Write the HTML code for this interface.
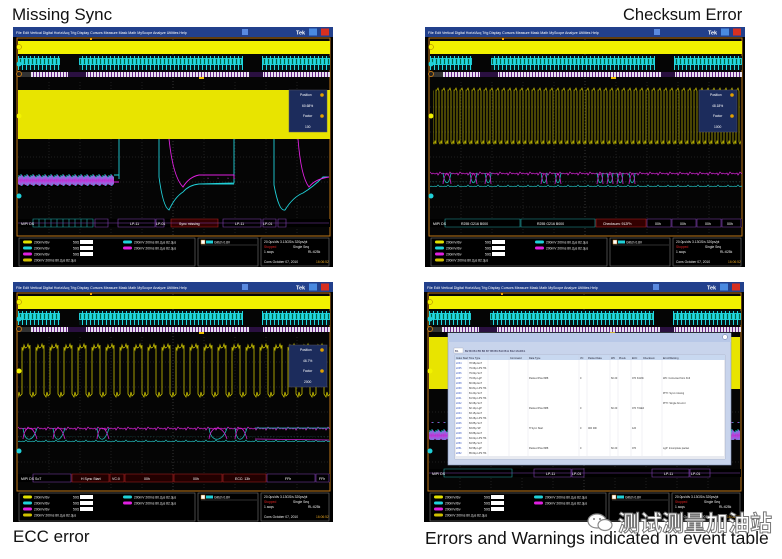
<!DOCTYPE html>
<html><head><meta charset="utf-8"><style>
body{margin:0;width:782px;height:559px;background:#fff;position:relative;overflow:hidden;font-family:"Liberation Sans",sans-serif}
.t{position:absolute;color:#111;font-family:"Liberation Sans","Noto Sans CJK SC",sans-serif;white-space:nowrap}
.p{position:absolute;width:320px;height:240px}
svg text{font-family:"Liberation Sans",sans-serif}
</style></head><body>
<svg width="0" height="0" style="position:absolute"><defs>
<pattern id="cy" width="4" height="14" patternUnits="userSpaceOnUse"><rect width="4" height="14" fill="#061818"/><rect x="0" y="3" width="4" height="7" fill="#1fc8d0"/><rect x="1" y="0" width="1" height="14" fill="#20d8e0"/><rect x="3" y="4" width="1" height="5" fill="#064"/></pattern>
<pattern id="dc" width="3" height="5" patternUnits="userSpaceOnUse"><rect width="3" height="5" fill="#6a2a8a"/><rect width="2" height="5" fill="#e8e0f0"/></pattern>
<pattern id="sq" width="6" height="60" patternUnits="userSpaceOnUse"><polyline points="0,3 1,1 2,4 2,55 3,57 4,54 5,57 5,3 6,3" fill="none" stroke="#c8c000" stroke-width=".7"/></pattern>
<pattern id="sq2" width="14" height="60" patternUnits="userSpaceOnUse"><polyline points="0,5 1,2 2,6 3,3 3,52 5,55 6,50 7,54 9,52 9,5 10,8 11,3 12,6 14,5" fill="none" stroke="#c8c000" stroke-width=".8"/></pattern>
<pattern id="mg" width="10" height="6" patternUnits="userSpaceOnUse"><polyline points="0,3 2,2 3,4 5,1 7,3 8,2 10,3" fill="none" stroke="#d020d0" stroke-width=".7"/></pattern>
<pattern id="cn" width="10" height="6" patternUnits="userSpaceOnUse"><polyline points="0,3 1,4 3,2 5,4 6,3 8,4 10,3" fill="none" stroke="#20b8b8" stroke-width=".7"/></pattern>
<pattern id="nz" width="6" height="18" patternUnits="userSpaceOnUse"><rect width="6" height="18" fill="#000"/><polyline points="0,4 1,14 2,3 3,15 4,5 5,13 6,4" fill="none" stroke="#20d0d8" stroke-width=".8"/><polyline points="0,14 1,5 2,15 3,4 4,14 5,6 6,14" fill="none" stroke="#e020e0" stroke-width=".8"/></pattern>
<g id="frame">
<rect width="320" height="240" fill="#000"/>
<rect width="320" height="10" fill="#22408c"/>
<text x="3" y="7" font-size="3.6" fill="#fff">File  Edit  Vertical  Digital  Horiz/Acq  Trig  Display  Cursors  Measure  Mask  Math  MyScope  Analyze  Utilities  Help</text>
<rect x="229" y="2" width="6" height="6" fill="#5a8ae0"/>
<text x="283" y="7.5" font-size="5.5" font-weight="bold" fill="#fff">Tek</text>
<rect x="296" y="1.5" width="8" height="7" fill="#4a8ae0"/><rect x="308" y="1.5" width="8" height="7" fill="#d83020"/>
<rect x="4" y="11" width="313" height="198" fill="#050505" stroke="#c07818" stroke-width="1"/>
<g stroke="#3a3a3a" stroke-width=".5" stroke-dasharray="1 2">
<line x1="36" y1="55" x2="36" y2="208"/><line x1="67" y1="55" x2="67" y2="208"/><line x1="98" y1="55" x2="98" y2="208"/><line x1="129" y1="55" x2="129" y2="208"/><line x1="160" y1="12" x2="160" y2="208" stroke="#666"/><line x1="191" y1="55" x2="191" y2="208"/><line x1="222" y1="55" x2="222" y2="208"/><line x1="253" y1="55" x2="253" y2="208"/><line x1="284" y1="55" x2="284" y2="208"/>
<line x1="5" y1="80" x2="316" y2="80"/><line x1="5" y1="105" x2="316" y2="105"/><line x1="5" y1="130" x2="316" y2="130"/><line x1="5" y1="155" x2="316" y2="155"/><line x1="5" y1="180" x2="316" y2="180"/>
</g>
<rect x="5" y="14" width="312" height="13" fill="#f2f200"/>
<rect x="5" y="29" width="312" height="14" fill="url(#cy)"/>
<rect x="47" y="28" width="19" height="15" fill="#050505"/><rect x="230" y="28" width="19" height="15" fill="#050505"/>
<rect x="5" y="45" width="312" height="5" fill="url(#dc)"/>
<rect x="5" y="45" width="13" height="5" fill="#333"/><rect x="55" y="45" width="18" height="5" fill="#2a1040"/><rect x="236" y="45" width="14" height="5" fill="#2a1040"/>
<rect x="77" y="11" width="2" height="2" fill="#f0a000"/><rect x="186" y="50" width="5" height="2" fill="#f0c000"/>
<circle cx="6" cy="20" r="2.5" fill="#f2f200" stroke="#a07000" stroke-width=".5"/>
<circle cx="6" cy="37" r="2.5" fill="#20d0d8"/><circle cx="6" cy="47" r="2.5" fill="#222" stroke="#c07818"/>
<rect x="0" y="210" width="320" height="30" fill="#000"/>
<rect x="6" y="211" width="176" height="28" fill="none" stroke="#777" stroke-width=".6"/>
<rect x="185" y="211" width="60" height="28" fill="none" stroke="#777" stroke-width=".6"/>
<rect x="248" y="211" width="68" height="28" fill="none" stroke="#777" stroke-width=".6"/>
<rect x="10" y="213.5" width="9" height="3" rx="1.5" fill="#e0e000"/><rect x="10" y="219.5" width="9" height="3" rx="1.5" fill="#20d0d8"/><rect x="10" y="225.5" width="9" height="3" rx="1.5" fill="#e020e0"/><rect x="10" y="231.5" width="9" height="3" rx="1.5" fill="#d0c000"/>
<g font-size="3.3" fill="#eee"><text x="21" y="216.5">200mV/div</text><text x="21" y="222.5">200mV/div</text><text x="21" y="228.5">200mV/div</text><text x="21" y="234.5">200mV  200ns  80.2μs  82.3μs</text>
<text x="60" y="216.5">50Ω</text><text x="60" y="222.5">50Ω</text><text x="60" y="228.5">50Ω</text>
<text x="121" y="216.5">200mV  200ns  80.2μs  82.3μs</text><text x="121" y="222.5">200mV  200ns  80.2μs  82.3μs</text>
<text x="201" y="216.5">Glitch  0.8V</text>
<text x="251" y="216">20.0μs/div  3.13GS/s    320ps/pt</text><text x="280" y="221">Single Seq</text><text x="251" y="226">1 acqs</text><text x="295" y="226">RL:625k</text><text x="251" y="236">Cons   October 07, 2010</text></g>
<text x="251" y="221" font-size="3.3" fill="#e02020">Stopped</text><text x="303" y="236" font-size="3.3" fill="#e0a020">16:06:52</text>
<rect x="67" y="213" width="13" height="4" fill="#fff"/><rect x="67" y="219" width="13" height="4" fill="#fff"/><rect x="67" y="225" width="13" height="4" fill="#fff"/>
<rect x="110" y="213.5" width="9" height="3" rx="1.5" fill="#20d0d8"/><rect x="110" y="219.5" width="9" height="3" rx="1.5" fill="#e020e0"/>
<rect x="188" y="213" width="4" height="4" fill="#fff" stroke="#c07818" stroke-width=".5"/><rect x="193" y="213.5" width="7" height="3" fill="#20d0d8"/>
<line x1="188" y1="218" x2="244" y2="218" stroke="#777" stroke-width=".4"/>
</g>
</defs></svg>

<div class="t" style="left:12px;top:5px;font-size:17px">Missing Sync</div>
<div class="t" style="left:623px;top:6px;font-size:16.5px">Checksum Error</div>
<div class="t" style="left:13px;top:527px;font-size:17px">ECC error</div>
<div class="t" style="left:425px;top:528px;font-size:17.5px">Errors and Warnings indicated in event table</div>

<!-- Top-left -->
<svg class="p" style="left:13px;top:27px" viewBox="0 0 320 240">
<use href="#frame"/>
<rect x="5" y="63" width="312" height="49" fill="#e8e400"/>
<rect x="5" y="142" width="96" height="18" fill="url(#nz)"/>
<g fill="none" stroke-width=".9">
<path d="M101,148 L106,148 L106,112 M106,148 L106,152" stroke="#20d0d8"/>
<path d="M146,112 L146,150 Q150,180 156,183 Q162,170 170,165 Q176,158 186,157 L221,156 L221,112 M261,112 L261,158 Q266,185 272,183 Q280,170 290,166 Q300,160 310,150 L316,150" stroke="#20d0d8"/>
<path d="M101,155 L106,155 M156,112 Q160,150 170,160 Q176,150 186,148 L221,148 L221,152 M285,112 Q288,150 296,160 Q302,152 316,150" stroke="#e020e0"/>
<path d="M186,157 L221,157" stroke="#20d0d8"/><path d="M186,151 L221,151" stroke="url(#mg)"/>
</g>
<circle cx="6" cy="89" r="2.5" fill="#f2f200"/><circle cx="6" cy="169" r="2.5" fill="#20d0d8"/>
<rect x="276" y="63" width="38" height="42" fill="#1c2c5c" stroke="#556" stroke-width=".5"/>
<text x="287" y="69" font-size="3.3" fill="#fff">Position</text><text x="289" y="80" font-size="3.3" fill="#fff">60.68%</text><text x="290" y="90" font-size="3.3" fill="#fff">Factor</text><text x="292" y="101" font-size="3.3" fill="#fff">100</text>
<circle cx="309" cy="68" r="1.8" fill="#e0a000"/><circle cx="309" cy="89" r="1.8" fill="#e0a000"/>
<rect x="5" y="192" width="312" height="8" fill="#000"/>
<g fill="none" stroke-width=".6"><path d="M20,192h60v8h-60z M20,192v8 M26,192v8 M32,192v8 M38,192v8 M44,192v8 M50,192v8 M56,192v8 M62,192v8 M68,192v8 M74,192v8" stroke="#20b0b0"/>
<path d="M82,192h13v8h-13z M105,192h37v8h-37z M143,192h8v8h-8z M210,192h38v8h-38z M250,192h13v8h-13z M265,192h8v8h-8z" stroke="#8040b0"/>
<path d="M158,192h47v8h-47z" stroke="#b02020" fill="#300"/><line x1="5" y1="196" x2="316" y2="196" stroke="#8040b0"/></g>
<text x="8" y="198" font-size="3.5" fill="#fff">MIPI DS</text><text x="117" y="198" font-size="3.5" fill="#fff">LP-11</text><text x="143" y="198" font-size="3.5" fill="#fff">LP-01</text><text x="166" y="198" font-size="3.5" fill="#fff">Sync missing</text><text x="222" y="198" font-size="3.5" fill="#fff">LP-11</text><text x="250" y="198" font-size="3.5" fill="#fff">LP-01</text>
</svg>

<!-- Top-right -->
<svg class="p" style="left:425px;top:27px" viewBox="0 0 320 240">
<use href="#frame"/>
<rect x="8" y="58" width="308" height="60" fill="url(#sq)"/>
<rect x="5" y="143" width="312" height="6" fill="url(#mg)"/><rect x="5" y="154" width="312" height="6" fill="url(#cn)"/>
<g fill="none" stroke-width=".8"><path d="M18,146 C20,160 24,158 26,146 M45,146 C47,160 50,158 52,146 M60,146 C62,160 65,158 66,146 M116,146 C118,160 121,158 122,146 M130,146 C132,160 134,158 136,146 M172,146 C174,160 177,158 178,146 M182,146 C184,160 187,158 188,146 M192,146 C194,160 197,158 198,146 M204,146 C206,160 209,158 210,146" stroke="#20b8b8"/>
<path d="M18,157 C20,143 24,144 26,157 M45,157 C47,143 50,144 52,157 M60,157 C62,143 65,144 66,157 M116,157 C118,143 121,144 122,157 M130,157 C132,143 134,144 136,157 M172,157 C174,143 177,144 178,157 M182,157 C184,143 187,144 188,157 M192,157 C194,143 197,144 198,157 M204,157 C206,143 209,144 210,157" stroke="#d020d0"/></g>
<circle cx="6" cy="89" r="2.5" fill="#f2f200"/><circle cx="6" cy="169" r="2.5" fill="#20d0d8"/>
<rect x="274" y="63" width="38" height="42" fill="#1c2c5c" stroke="#556" stroke-width=".5"/>
<text x="285" y="69" font-size="3.3" fill="#fff">Position</text><text x="287" y="80" font-size="3.3" fill="#fff">48.18%</text><text x="288" y="90" font-size="3.3" fill="#fff">Factor</text><text x="289" y="101" font-size="3.3" fill="#fff">1000</text>
<circle cx="307" cy="68" r="1.8" fill="#e0a000"/><circle cx="307" cy="89" r="1.8" fill="#e0a000"/>
<rect x="5" y="192" width="312" height="8" fill="#000"/>
<g fill="none" stroke-width=".6"><path d="M20,192h75v8h-75z M96,192h74v8h-74z" stroke="#20a0a0"/><path d="M171,192h50v8h-50z" stroke="#b02020" fill="#300"/><path d="M222,192h24v8h-24z M247,192h24v8h-24z M272,192h24v8h-24z M297,192h19v8h-19z" stroke="#8040b0"/></g>
<g font-size="3.5" fill="#fff"><text x="8" y="198">MIPI DS</text><text x="36" y="198">R255 G216 B000</text><text x="112" y="198">R255 G216 B000</text><text x="178" y="198">Checksum: 912Fh</text><text x="230" y="198">00h</text><text x="255" y="198">00h</text><text x="280" y="198">00h</text><text x="302" y="198">00h</text></g>
</svg>

<!-- Bottom-left -->
<svg class="p" style="left:13px;top:282px" viewBox="0 0 320 240">
<use href="#frame"/>
<rect x="5" y="58" width="312" height="60" fill="url(#sq2)"/>
<rect x="5" y="143" width="312" height="6" fill="url(#mg)"/><rect x="5" y="154" width="312" height="6" fill="url(#cn)"/>
<g fill="none" stroke-width=".8"><path d="M10,146 C12,162 20,160 24,146 M40,146 C42,162 48,160 52,146 M84,146 C86,162 92,160 96,146 M196,146 C198,162 210,160 214,146 M222,146 C224,162 230,160 234,146 M242,146 L316,146" stroke="#20b8b8"/>
<path d="M10,157 C12,142 20,143 24,157 M40,157 C42,142 48,143 52,157 M84,157 C86,142 92,143 96,157 M196,157 C198,142 210,143 214,157 M222,157 C224,142 230,143 234,157 M242,157 L316,158" stroke="#d020d0"/></g>
<circle cx="6" cy="89" r="2.5" fill="#f2f200"/><circle cx="6" cy="169" r="2.5" fill="#20d0d8"/>
<rect x="276" y="63" width="38" height="42" fill="#1c2c5c" stroke="#556" stroke-width=".5"/>
<text x="287" y="69" font-size="3.3" fill="#fff">Position</text><text x="290" y="80" font-size="3.3" fill="#fff">46.7%</text><text x="290" y="90" font-size="3.3" fill="#fff">Factor</text><text x="291" y="101" font-size="3.3" fill="#fff">2000</text>
<circle cx="309" cy="68" r="1.8" fill="#e0a000"/><circle cx="309" cy="89" r="1.8" fill="#e0a000"/>
<rect x="5" y="192" width="312" height="8" fill="#000"/>
<g fill="none" stroke-width=".6"><path d="M20,192h38v8h-38z M254,192h48v8h-48z M303,192h13v8h-13z" stroke="#8040b0"/><path d="M59,192h37v8h-37z M97,192h14v8h-14z M112,192h48v8h-48z M161,192h48v8h-48z M210,192h43v8h-43z" stroke="#b02020" fill="#200"/></g>
<g font-size="3.5" fill="#fff"><text x="8" y="198">MIPI DS SoT</text><text x="68" y="198">H Sync Start</text><text x="99" y="198">VC:0</text><text x="131" y="198">00h</text><text x="180" y="198">00h</text><text x="222" y="198">ECC: 13h</text><text x="272" y="198">FFh</text><text x="306" y="198">FFh</text></g>
</svg>

<!-- Bottom-right -->
<svg class="p" style="left:424px;top:282px" viewBox="0 0 320 240">
<use href="#frame"/>
<rect x="5" y="55" width="25" height="52" fill="#e8e400"/><rect x="300" y="55" width="16" height="52" fill="#e8e400"/>
<rect x="5" y="140" width="20" height="18" fill="url(#nz)"/><rect x="300" y="140" width="16" height="18" fill="url(#nz)"/>
<circle cx="6" cy="89" r="2.5" fill="#f2f200"/><circle cx="6" cy="169" r="2.5" fill="#20d0d8"/>
<rect x="5" y="187" width="312" height="8" fill="#000"/>
<g fill="none" stroke-width=".6"><path d="M20,187h68v8h-68z" stroke="#20a0a0"/><path d="M110,187h37v8h-37z M148,187h12v8h-12z M228,187h37v8h-37z M266,187h20v8h-20z" stroke="#8040b0"/><line x1="5" y1="191" x2="316" y2="191" stroke="#8040b0"/></g>
<g font-size="3.5" fill="#fff"><text x="8" y="193">MIPI DS</text><text x="122" y="193">LP-11</text><text x="148" y="193">LP-01</text><text x="240" y="193">LP-11</text><text x="267" y="193">LP-01</text></g>
<rect x="24" y="51" width="283" height="132" fill="#c8d4ec" stroke="#8898c0" stroke-width=".6"/>
<rect x="24" y="51" width="283" height="9" fill="#b8c8e8"/>
<circle cx="301" cy="55" r="2.5" fill="#fff" stroke="#6070a0" stroke-width=".5"/>
<g font-size="2.8" fill="#224">
<rect x="30" y="66" width="9" height="5" fill="#fff" stroke="#99a" stroke-width=".3"/><text x="31" y="70">B1</text>
<text x="41" y="70">B2   B3   B4   B5   B6   B7   B8   B9   B10   B11   B12   MARK1</text></g>
<rect x="31" y="73" width="270" height="104" fill="#fff" stroke="#99a" stroke-width=".4"/>
<rect x="31" y="73" width="270" height="5" fill="#c8d8f0"/>
<g stroke="#ccd" stroke-width=".3"><line x1="44" y1="73" x2="44" y2="177"/><line x1="64" y1="73" x2="64" y2="177"/><line x1="85" y1="73" x2="85" y2="177"/><line x1="104" y1="73" x2="104" y2="177"/><line x1="155" y1="73" x2="155" y2="177"/><line x1="163" y1="73" x2="163" y2="177"/><line x1="186" y1="73" x2="186" y2="177"/><line x1="194" y1="73" x2="194" y2="177"/><line x1="207" y1="73" x2="207" y2="177"/><line x1="218" y1="73" x2="218" y2="177"/><line x1="238" y1="73" x2="238" y2="177"/></g>
<g font-size="2.5" fill="#223">
<text x="32" y="77">Index  Start Time   Type</text><text x="86" y="77">Command</text><text x="105" y="77">Data Type</text><text x="156" y="77">VC</text><text x="164" y="77">Packet Data</text><text x="187" y="77">WC</text><text x="195" y="77">Pixels</text><text x="208" y="77">ECC</text><text x="219" y="77">Checksum</text><text x="239" y="77">Error/Warning</text>
<g font-family="Liberation Mono" fill="#333">
<text x="45" y="82">78.98μ  EoT</text><text x="45" y="87">79.09μ  LPS HS</text><text x="45" y="92">79.62μ  SoT</text>
<text x="45" y="97">79.63μ  LgP</text><text x="105" y="97">Packed Pixel 888</text><text x="156" y="97">0</text><text x="187" y="97">60  20</text><text x="208" y="97">07h  3413h</text><text x="239" y="97">WC: Corrected from 316</text>
<text x="45" y="102">80.69μ  EoT</text><text x="45" y="107">80.81μ  LPS HS</text><text x="45" y="112">81.20μ  SoT</text><text x="239" y="112">PHY: Sync missing</text>
<text x="45" y="117">81.50μ  LPS HS</text><text x="45" y="122">82.08μ  SoT</text><text x="239" y="122">PHY: Single bit error</text>
<text x="45" y="127">82.10μ  LgP</text><text x="105" y="127">Packed Pixel 888</text><text x="156" y="127">0</text><text x="187" y="127">60  20</text><text x="208" y="127">07h  731Eh</text>
<text x="45" y="132">83.15μ  EoT</text><text x="45" y="137">83.28μ  LPS HS</text><text x="45" y="142">83.85μ  SoT</text>
<text x="45" y="147">83.83μ  SP</text><text x="105" y="147">H Sync Start</text><text x="156" y="147">0</text><text x="164" y="147">00h 00h</text><text x="208" y="147">12h</text>
<text x="45" y="152">83.88μ  EoT</text><text x="45" y="157">84.02μ  LPS HS</text><text x="45" y="162">84.55μ  SoT</text>
<text x="45" y="167">84.58μ  LgP</text><text x="105" y="167">Packed Pixel 888</text><text x="156" y="167">0</text><text x="187" y="167">60  20</text><text x="208" y="167">07h</text><text x="239" y="167">LgP: Incomplete packet</text>
<text x="45" y="172">85.62μ  LPS HS</text></g>
<g fill="#3050c0"><text x="32" y="82">2234</text><text x="32" y="87">2235</text><text x="32" y="92">2236</text><text x="32" y="97">2237</text><text x="32" y="102">2238</text><text x="32" y="107">2239</text><text x="32" y="112">2240</text><text x="32" y="117">2241</text><text x="32" y="122">2242</text><text x="32" y="127">2243</text><text x="32" y="132">2244</text><text x="32" y="137">2245</text><text x="32" y="142">2246</text><text x="32" y="147">2247</text><text x="32" y="152">2248</text><text x="32" y="157">2249</text><text x="32" y="162">2250</text><text x="32" y="167">2251</text><text x="32" y="172">2252</text></g>
</g>
<rect x="31" y="174" width="270" height="3" fill="#e8eaf0"/>
</svg>

<div class="t" style="left:586px;top:512px;width:30px;height:20px">
<svg width="30" height="20" viewBox="0 0 30 20"><ellipse cx="11" cy="9" rx="9" ry="7" fill="#fff" stroke="#888" stroke-width="1.2"/><ellipse cx="19" cy="13" rx="7" ry="5.5" fill="#fff" stroke="#888" stroke-width="1.2"/><circle cx="8" cy="7" r="1" fill="#777"/><circle cx="14" cy="7" r="1" fill="#777"/></svg></div>
<div class="t" style="left:618px;top:506px;font-size:22px;color:#fff;-webkit-text-stroke:1px #777;font-weight:bold">测试测量加油站</div>
</body></html>
